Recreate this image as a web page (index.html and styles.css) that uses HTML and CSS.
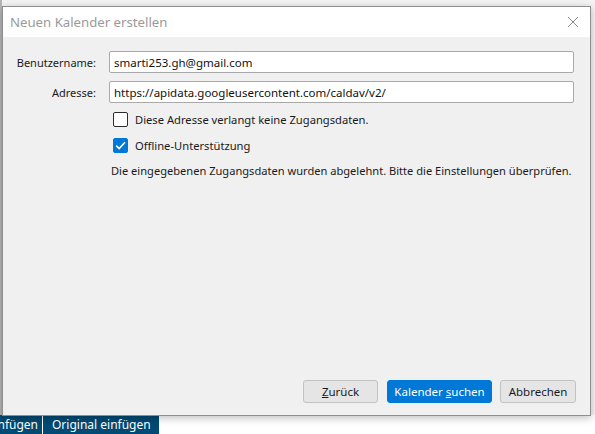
FILE: index.html
```html
<!DOCTYPE html>
<html lang="de">
<head>
  <meta charset="UTF-8" />
  <title>Neuen Kalender erstellen</title>
  <link rel="stylesheet" href="styles.css">
</head>
<body>
  <div class="app">
    <div class="app-area"></div>
    <div class="paste-bar">
      <span class="paste-btn cut">einfügen</span>
      <span class="paste-btn">Original einfügen</span>
    </div>
  </div>

  <div class="dialog">
    <div class="titlebar">
      <span class="title">Neuen Kalender erstellen</span>
      <svg class="close" width="12" height="12" viewBox="0 0 12 12">
        <path d="M1 1 L11 11 M11 1 L1 11" stroke="#8a8a8a" stroke-width="1" fill="none" />
      </svg>
    </div>

    <div class="content">
      <div class="form">
        <label class="label" for="user">Benutzername:</label>
        <input class="field" id="user" type="text" value="smarti253.gh@gmail.com" />
        <label class="label" for="addr">Adresse:</label>
        <input class="field" id="addr" type="text" value="https://apidata.googleusercontent.com/caldav/v2/" />
      </div>

      <div class="options">
        <label class="check-row">
          <span class="box"></span>
          Diese Adresse verlangt keine Zugangsdaten.
        </label>
        <label class="check-row">
          <span class="box checked">
            <svg width="15" height="15" viewBox="0 0 15 15">
              <path d="M3.2 7.6 L6.2 10.6 L12 4.2" stroke="#fff" stroke-width="1.6" fill="none" />
            </svg>
          </span>
          Offline-Unterstützung
        </label>
        <p class="error">Die eingegebenen Zugangsdaten wurden abgelehnt. Bitte die Einstellungen überprüfen.</p>
      </div>

      <div class="buttons">
        <button class="btn back"><u>Z</u>urück</button>
        <button class="btn primary">Kalender <u>s</u>uchen</button>
        <button class="btn cancel">Abbrechen</button>
      </div>
    </div>
  </div>
</body>
</html>
```

FILE: styles.css
```css
* {
  margin: 0;
  padding: 0;
  box-sizing: border-box;
  font-family: 'Segoe UI', 'Noto Sans', 'Open Sans', sans-serif;
}

body {
  width: 595px;
  height: 434px;
  overflow: hidden;
  background: #f3f3f3;
  position: relative;
}

.app {
  height: 100%;
  display: flex;
  flex-direction: column;
}

.app-area {
  flex: 1;
  border-left: 2px solid #b5b5b5;
}

.paste-bar {
  height: 19px;
  display: flex;
  background: #fff;
}

.paste-btn {
  background: #004a74;
  color: #fff;
  font-size: 12px;
  line-height: 19px;
  padding: 0 8px 0 9px;
  white-space: nowrap;
}

.paste-btn.cut {
  padding: 0 4px 0 0;
  margin-right: 1px;
  width: 42px;
  text-align: right;
  overflow: hidden;
  direction: rtl;
}

/* dialog window floating over the app */
.dialog {
  position: absolute;
  left: 2px;
  top: 6px;
  width: 589px;
  height: 410px;
  background: #f0f0f0;
  border: 1px solid #8e8e8e;
  box-shadow: 0 2px 8px rgba(0, 0, 0, 0.25);
  display: flex;
  flex-direction: column;
}

.titlebar {
  height: 30px;
  background: #fff;
  display: flex;
  align-items: center;
  justify-content: space-between;
  padding: 0 10px 0 7px;
}

.title {
  font-size: 13.2px;
  color: #9a9a9a;
}

.close {
  margin-right: 1px;
}

.content {
  flex: 1;
  display: flex;
  flex-direction: column;
  padding: 14px 14px 12px 0;
}

.form {
  display: grid;
  grid-template-columns: 93px 1fr;
  column-gap: 13px;
  row-gap: 8px;
  align-items: center;
  padding-right: 2px;
}

.label {
  text-align: right;
  font-size: 11px;
  color: #1a1a1a;
}

.field {
  height: 22px;
  border: 1px solid #a9a9a9;
  border-radius: 2px;
  background: #fff;
  padding: 0 4px;
  font-size: 11.5px;
  color: #111;
  outline: none;
}

.options {
  padding-left: 108px;
  margin-top: 3px;
}

.check-row {
  display: flex;
  align-items: center;
  gap: 7px;
  height: 26px;
  padding-left: 2px;
  font-size: 11.2px;
  color: #1a1a1a;
}

.box {
  width: 15px;
  height: 15px;
  border: 1px solid #2b2b2b;
  border-radius: 2px;
  background: #fff;
  display: flex;
}

.box.checked {
  background: #0078d7;
  border-color: #0078d7;
}

.box.checked svg {
  margin: -1px;
}

.error {
  font-size: 11.1px;
  color: #1a1a1a;
  margin-top: 5px;
  white-space: nowrap;
}

.buttons {
  margin-top: auto;
  display: flex;
  justify-content: flex-end;
  gap: 8px;
}

.btn {
  height: 23px;
  font-size: 11.5px;
  border-radius: 3px;
  border: 1px solid #c2c2c2;
  background: #e5e5e5;
  color: #1a1a1a;
  padding: 0;
  white-space: nowrap;
}

.btn.back {
  width: 75px;
  margin-right: 1px;
}

.btn.primary {
  width: 105px;
  background: #0078d7;
  border-color: #0078d7;
  color: #fff;
}

.btn.cancel {
  width: 76px;
}
```
